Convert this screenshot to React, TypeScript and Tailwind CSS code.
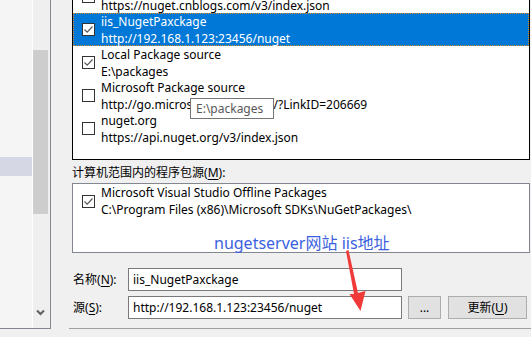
import React from 'react';

type Source = { name: string; url: string; checked: boolean; selected?: boolean };

const userSources: Source[] = [
  { name: 'nuget.cnblogs.com', url: 'https://nuget.cnblogs.com/v3/index.json', checked: true },
  { name: 'iis_NugetPaxckage', url: 'http://192.168.1.123:23456/nuget', checked: true, selected: true },
  { name: 'Local Package source', url: 'E:\\packages', checked: true },
  { name: 'Microsoft Package source', url: 'http://go.microsoft.com/fwlink/?LinkID=206669', checked: false },
  { name: 'nuget.org', url: 'https://api.nuget.org/v3/index.json', checked: false },
];

function Check({ checked }: { checked: boolean }) {
  return (
    <div className="w-[13px] h-[13px] shrink-0 border border-[#333333] bg-white flex items-center justify-center">
      {checked && (
        <svg width="11" height="11" viewBox="0 0 11 11" fill="none" stroke="#5a5a5a" strokeWidth="1.2">
          <path d="M1.5 5.5 L4.2 8.2 L9.5 2.5" />
        </svg>
      )}
    </div>
  );
}

function SourceRow({ s }: { s: Source }) {
  return (
    <div
      className={
        s.selected
          ? 'h-[33px] flex items-center gap-[6px] pl-[8px] bg-[#0078d7] text-white border border-dotted border-[#d98a1c]'
          : 'h-[33px] flex items-center gap-[6px] pl-[9px] text-black'
      }
    >
      <Check checked={s.checked} />
      <div className="flex flex-col leading-[17px] whitespace-nowrap">
        <span>{s.name}</span>
        <span>{s.url}</span>
      </div>
    </div>
  );
}

function Label({ text, hot, after }: { text: string; hot: string; after?: string }) {
  return (
    <span className="whitespace-nowrap">
      {text}(<span className="underline underline-offset-2">{hot}</span>){after ?? ':'}
    </span>
  );
}

export default function App() {
  return (
    <div className="relative w-[531px] h-[337px] overflow-hidden bg-[#f0f0f0] flex items-start text-[12px] text-black font-['Noto_Sans','Noto_Sans_CJK_SC',sans-serif]">
      {/* left tree pane with scrollbar */}
      <div className="w-[51px] h-[329px] shrink-0 flex border-r border-b border-[#828790]">
        <div className="w-[32px] bg-[#f5f5f5] pt-[157px]">
          <div className="h-[19px] bg-[#d5d7e4]" />
        </div>
        <div className="w-px bg-white" />
        <div className="w-[17px] bg-[#efefef] flex flex-col">
          <div className="mt-[50px] h-[164px] w-[15px] bg-[#cdcdcd]" />
          <div className="flex-1" />
          <div className="h-[20px] flex items-start justify-start pl-[3px] pt-[1px]">
            <svg width="9" height="7" viewBox="0 0 9 7" fill="none" stroke="#606060" strokeWidth="2">
              <path d="M1 1.5 L4.5 5 L8 1.5" />
            </svg>
          </div>
        </div>
      </div>

      {/* main options area */}
      <div className="flex-1 flex flex-col">
        <div className="ml-[21px] w-[458px] h-[181px] -mt-[21px] border border-black bg-white flex flex-col">
          {userSources.map((s) => (
            <SourceRow key={s.name} s={s} />
          ))}
        </div>

        <div className="ml-[21px] mt-[4px] leading-[17px]">
          <Label text="计算机范围内的程序包源" hot="M" />
        </div>

        <div className="ml-[21px] mt-[2px] w-[458px] h-[70px] border border-[#828790] bg-white">
          <div className="h-[34px] flex items-center gap-[6px] pl-[9px]">
            <Check checked />
            <div className="flex flex-col leading-[17px] whitespace-nowrap">
              <span>Microsoft Visual Studio Offline Packages</span>
              <span>C:\Program Files (x86)\Microsoft SDKs\NuGetPackages\</span>
            </div>
          </div>
        </div>

        <div className="ml-[21px] mt-[15px] flex flex-col gap-[5px]">
          <div className="flex items-center h-[23px]">
            <div className="w-[56px] pl-px">
              <Label text="名称" hot="N" />
            </div>
            <div className="w-[274px] h-[23px] border border-[#7a7a7a] bg-white flex items-center pl-[4px]">
              iis_NugetPaxckage
            </div>
          </div>
          <div className="flex items-center h-[23px]">
            <div className="w-[56px] pl-px">
              <Label text="源" hot="S" />
            </div>
            <div className="w-[274px] h-[23px] border border-[#7a7a7a] bg-white flex items-center pl-[4px]">
              http://192.168.1.123:23456/nuget
            </div>
            <button className="ml-[6px] w-[33px] h-[23px] border border-[#adadad] bg-[#e1e1e1] flex items-center justify-center">
              ...
            </button>
            <button className="ml-[7px] w-[79px] h-[23px] border border-[#adadad] bg-[#e1e1e1] flex items-center justify-center">
              <Label text="更新" hot="U" after="" />
            </button>
          </div>
        </div>

        <div className="ml-[18px] mt-[9px] h-px bg-[#a0a0a0]" />
      </div>

      {/* tooltip */}
      <div className="absolute left-[190px] top-[98px] h-[21px] w-[84px] border border-[#767676] bg-white text-[#575757] flex items-center pl-[5px]">
        E:\packages
      </div>

      {/* annotation */}
      <div className="absolute left-[214px] top-[233px] text-[16px] leading-[20px] text-[#3b62de] whitespace-nowrap">
        nugetserver网站 iis地址
      </div>
      <svg className="absolute left-0 top-0 pointer-events-none" width="531" height="337" viewBox="0 0 531 337">
        <polygon points="346,251 348.5,250 358,293 365.5,291 360.5,311 349.5,294 354,294" fill="#f03a3a" />
      </svg>
    </div>
  );
}
